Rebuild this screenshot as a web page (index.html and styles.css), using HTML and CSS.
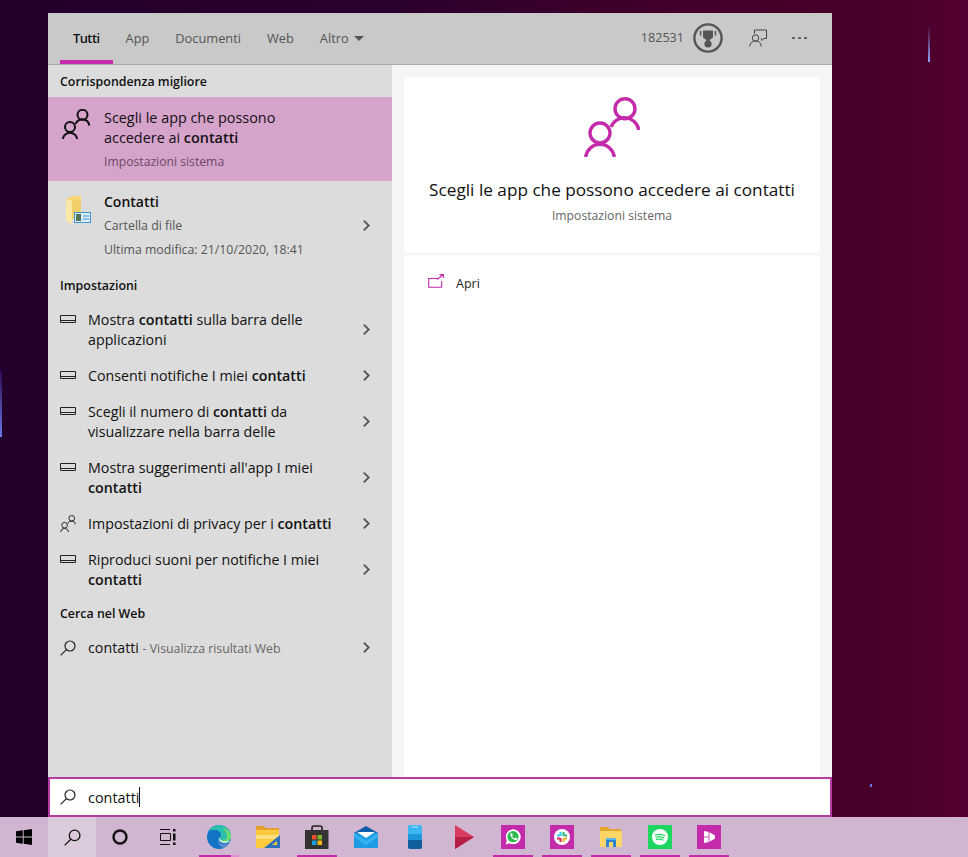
FILE: index.html
```html
<!DOCTYPE html>
<html lang="it">
<head>
<meta charset="utf-8">
<title>Cerca</title>
<link rel="stylesheet" href="styles.css">
</head>
<body>
<svg class="defs" width="0" height="0">
  <symbol id="people" viewBox="0 0 56 60">
    <circle class="ps" cx="41" cy="11.700" r="10"/>
    <path class="ps" d="M27 30A14.500 14.500 0 0 1 54.800 33"/>
    <circle class="ps" cx="16" cy="36" r="10"/>
    <path class="ps" d="M1.700 60A14.400 14.400 0 0 1 30.300 60"/>
  </symbol>
  <symbol id="monitor" viewBox="0 0 16 8">
    <path d="M.5.5h15v7H.5zM.5 5.500h15" fill="none" stroke="currentColor" stroke-width="1"/>
  </symbol>
  <symbol id="lens" viewBox="0 0 16 16">
    <circle cx="10" cy="6" r="5" fill="none" stroke="currentColor" stroke-width="1.200"/>
    <path d="M6.400 9.600L.6 15.400" fill="none" stroke="currentColor" stroke-width="1.200"/>
  </symbol>
  <symbol id="chev" viewBox="0 0 10 14">
    <path d="M2 1.500L7.500 7L2 12.500" fill="none" stroke="currentColor" stroke-width="2"/>
  </symbol>
</svg>

<i class="glow glow-left"></i>
<i class="glow glow-right"></i>
<i class="glow glow-dot"></i>

<main class="stage">
  <section class="window">
    <header class="tabs">
      <nav class="tablist">
        <span class="tab tab-active">Tutti</span>
        <span class="tab">App</span>
        <span class="tab">Documenti</span>
        <span class="tab">Web</span>
        <span class="tab">Altro<i class="caret"></i></span>
      </nav>
      <div class="tools">
        <span class="score">182531</span>
        <svg class="trophy" viewBox="0 0 30 30" width="30" height="30">
          <circle cx="15" cy="15" r="13.600" fill="none" stroke="#555" stroke-width="2.400"/>
          <path d="M10 7.500h10v7l-3.300 2.600v1.600h-3.400v-1.600L10 14.500z" fill="#555"/>
          <circle cx="15" cy="21" r="3.600" fill="#555"/>
          <path d="M7.600 8v4.500M22.400 8v4.500" stroke="#555" stroke-width="1.600"/>
        </svg>
        <svg class="feedback" viewBox="0 0 18 18" width="18" height="18">
          <path d="M5.500 4.500V1h12v8.500h-3l-1.500 2-1-2" fill="none" stroke="#444" stroke-width="1"/>
          <circle cx="6.500" cy="9" r="3.200" fill="#c9c9c9" stroke="#444" stroke-width="1"/>
          <path d="M.8 17.500c0-3.600 2.400-5.500 5.700-5.500s5.700 1.900 5.700 5.500" fill="none" stroke="#444" stroke-width="1"/>
        </svg>
        <span class="dots"><i></i><i></i><i></i></span>
      </div>
    </header>

    <div class="panes">
      <aside class="results">
        <h2 class="heading">Corrispondenza migliore</h2>
        <div class="best">
          <svg class="best-icon"><use href="#people"/></svg>
          <div class="best-text">
            <p class="line best-line">Scegli le app che possono<br>accedere ai <b>contatti</b></p>
            <p class="sub best-sub">Impostazioni sistema</p>
          </div>
        </div>
        <div class="file">
          <svg class="file-icon" viewBox="0 0 26 28" width="26" height="28">
            <path d="M1 3l7-3h8v23H1z" fill="#f6d675"/>
            <path d="M7 5l9-1v19H7z" fill="#f3cf68"/>
            <path d="M1 3l6 2v23l-6-3z" fill="#fbe8a6"/>
            <rect x="9.500" y="16.500" width="16" height="10" fill="#d6ecfa" stroke="#3f95cf"/>
            <rect x="11" y="18" width="5" height="7" fill="#55725a"/>
            <path d="M18 20h6M18 23h6" stroke="#3f95cf"/>
          </svg>
          <div class="file-text">
            <p class="file-title">Contatti</p>
            <p class="file-sub">Cartella di file</p>
            <p class="file-sub">Ultima modifica: 21/10/2020, 18:41</p>
          </div>
          <svg class="chev"><use href="#chev"/></svg>
        </div>

        <h2 class="heading">Impostazioni</h2>
        <div class="row"><svg class="mon"><use href="#monitor"/></svg><p class="line row-text">Mostra <b>contatti</b> sulla barra delle applicazioni</p><svg class="chev"><use href="#chev"/></svg></div>
        <div class="row"><svg class="mon"><use href="#monitor"/></svg><p class="line row-text">Consenti notifiche I miei <b>contatti</b></p><svg class="chev"><use href="#chev"/></svg></div>
        <div class="row"><svg class="mon"><use href="#monitor"/></svg><p class="line row-text">Scegli il numero di <b>contatti</b> da visualizzare nella barra delle</p><svg class="chev"><use href="#chev"/></svg></div>
        <div class="row"><svg class="mon"><use href="#monitor"/></svg><p class="line row-text">Mostra suggerimenti all'app I miei <b>contatti</b></p><svg class="chev"><use href="#chev"/></svg></div>
        <div class="row"><svg class="ppl"><use href="#people"/></svg><p class="line row-text">Impostazioni di privacy per i <b>contatti</b></p><svg class="chev"><use href="#chev"/></svg></div>
        <div class="row"><svg class="mon"><use href="#monitor"/></svg><p class="line row-text">Riproduci suoni per notifiche I miei <b>contatti</b></p><svg class="chev"><use href="#chev"/></svg></div>

        <h2 class="heading">Cerca nel Web</h2>
        <div class="row"><svg class="row-lens"><use href="#lens"/></svg><p class="line row-text">contatti <span class="hint">- Visualizza risultati Web</span></p><svg class="chev"><use href="#chev"/></svg></div>
      </aside>

      <div class="detail">
        <div class="card card-top">
          <svg class="hero"><use href="#people"/></svg>
          <h1 class="hero-title">Scegli le app che possono accedere ai contatti</h1>
          <p class="hero-sub">Impostazioni sistema</p>
        </div>
        <div class="card card-actions">
          <div class="action">
            <svg class="open" viewBox="0 0 16 14" width="16" height="14">
              <path d="M10 4.500H.7v8.800h13V7M9 5.500L15 .8M11.500.6H15.400v3.500" fill="none" stroke="#c42bab" stroke-width="1.100"/>
            </svg>
            <span class="action-label">Apri</span>
          </div>
        </div>
      </div>
    </div>

    <div class="searchbox">
      <svg class="box-lens"><use href="#lens"/></svg>
      <span class="query">contatti</span><i class="cursor"></i>
    </div>
  </section>
</main>

<footer class="taskbar">
  <span class="slot">
    <svg viewBox="0 0 16 16" width="16" height="16"><path d="M0 2.300L6.800 1.300V7.600H0zM7.700 1.200L16 0V7.600H7.700zM0 8.400H6.800V14.700L0 13.700zM7.700 8.400H16V16L7.700 14.800z" fill="#000"/></svg>
  </span>
  <span class="slot slot-active"><svg class="bar-lens"><use href="#lens"/></svg></span>
  <span class="slot"><svg viewBox="0 0 16 16" width="16" height="16"><circle cx="8" cy="8" r="6.500" fill="none" stroke="#111" stroke-width="2.400"/></svg></span>
  <span class="slot"><svg viewBox="0 0 16 16" width="16" height="16"><path d="M0 .5h10M0 15.500h10M.5 4.500h10v7H.5z" fill="none" stroke="#111"/><rect x="13" y="0" width="2.500" height="2.500" fill="#111"/><rect x="13" y="4.500" width="2.500" height="7" fill="#111"/><rect x="13" y="13.500" width="2.500" height="2.500" fill="#111"/></svg></span>

  <span class="slot slot-run slot-edge">
    <svg viewBox="0 0 24 24" width="24" height="24">
      <circle cx="12" cy="12" r="12" fill="#1274c6"/>
      <path d="M1 7C3 2 8 0 12 0c7 0 12 5 12 11 0 4-3 6-6 6-3 0-6-1-6-3 0-1 2-2 2-4 0-3-3-5-6-5-3 0-6 0-8 2z" fill="#2cbfae"/>
      <path d="M16 3c5 1 8 5 8 8 0 4-3 6-6 6-2 0-4-.5-5-1.500 4 .5 7-1 7-4 0-3-2-6-4-8.500z" fill="#6ddc6f"/>
      <path d="M11 14c0 3 3 5 7 5 2 0 4-.8 5.500-2.500L24 20l-6 4c-4-1-8-5-7-10z" fill="#d1b6d1" opacity=".35"/>
      <path d="M12 12.500c-1 3 2 5.500 6 5.500 2 0 4-.7 5-2-1.500 0-3 .5-5 .5-3 0-5-1.500-6-4z" fill="#e9f6f4"/>
    </svg>
  </span>
  <span class="slot">
    <svg viewBox="0 0 24 22" width="24" height="22">
      <path d="M0 0h8l2 2h13v4H0z" fill="#e2a22c"/>
      <path d="M0 4h23v18H0z" fill="#fcc93f"/>
      <path d="M0 9h23v4H0z" fill="#fde07b"/>
      <path d="M24 9v13H8z" fill="#2b6fb8"/>
      <path d="M21 15v4h-5z" fill="#fcc93f"/>
    </svg>
  </span>
  <span class="slot slot-run">
    <svg viewBox="0 0 24 24" width="24" height="24">
      <path d="M7 5V3a2 2 0 0 1 2-2h6a2 2 0 0 1 2 2v2" fill="none" stroke="#222" stroke-width="1.600"/>
      <path d="M0 5h23.500v19H0z" fill="#333"/>
      <rect x="7" y="10" width="4.500" height="4.500" fill="#ea4e2c"/>
      <rect x="12.500" y="10" width="4.500" height="4.500" fill="#7db72c"/>
      <rect x="7" y="15.500" width="4.500" height="4.500" fill="#1c9fe3"/>
      <rect x="12.500" y="15.500" width="4.500" height="4.500" fill="#fdb813"/>
    </svg>
  </span>
  <span class="slot">
    <svg viewBox="0 0 24 22" width="24" height="22">
      <path d="M0 7L12 0l12 7-12 8z" fill="#0f5da8"/>
      <path d="M0 7h24v15H0z" fill="#1f9be6"/>
      <path d="M3 6h18l-9 6z" fill="#fff"/>
      <path d="M0 7l12 8 12-8v4l-12 8-12-8z" fill="#38b1f0"/>
    </svg>
  </span>
  <span class="slot">
    <svg viewBox="0 0 14 24" width="14" height="24">
      <rect width="14" height="24" rx="2" fill="#3db7f2"/>
      <rect y="9" width="14" height="6" fill="#1f96dc"/>
      <path d="M0 15h14v7a2 2 0 0 1-2 2H2a2 2 0 0 1-2-2z" fill="#105f9c"/>
      <path d="M4 2h6" stroke="#bfe8fb"/>
    </svg>
  </span>
  <span class="slot">
    <svg viewBox="0 0 20 24" width="20" height="24">
      <path d="M1 0l19 12L1 24z" fill="#d93a5e"/>
      <path d="M1 12h19L1 24z" fill="#b51f45"/>
    </svg>
  </span>
  <span class="slot slot-run">
    <span class="tile">
      <svg viewBox="0 0 16 16" width="16" height="16">
        <path d="M.6 15.400l1.200-4.100A7.400 7.400 0 1 1 4.700 14.200z" fill="#fff"/>
        <circle cx="8" cy="7.700" r="5.600" fill="#2fb84f"/>
        <path d="M5.500 4.500l1.400-.5 1 2-.9 1c.5 1 1.500 2 2.500 2.500l1-1 2 1-.5 1.500c-3 1-7.500-3.500-6.500-6.500z" fill="#fff"/>
      </svg>
    </span>
  </span>
  <span class="slot slot-run">
    <span class="tile">
      <svg viewBox="0 0 16 16" width="16" height="16">
        <circle cx="8" cy="8" r="8" fill="#fff"/>
        <path d="M6.500 3v4M3 6.500h3" stroke="#36c5f0" stroke-width="2"/>
        <path d="M9.500 3v4M10 6.500h3" stroke="#2eb67d" stroke-width="2"/>
        <path d="M9.500 9v4M10 9.500h3" stroke="#ecb22e" stroke-width="2"/>
        <path d="M6.500 9v4M3 9.500h3" stroke="#e01e5a" stroke-width="2"/>
      </svg>
    </span>
  </span>
  <span class="slot slot-run">
    <svg viewBox="0 0 22 20" width="22" height="20">
      <path d="M0 0h8l2 2h11v17H0z" fill="#e3a52e"/>
      <path d="M0 4h22v16H0z" fill="#fcd568"/>
      <path d="M6 11h10v9h-3v-5H9v5H6z" fill="#2b86d1"/>
      <path d="M6 11h10v2H6z" fill="#59b4ec"/>
    </svg>
  </span>
  <span class="slot slot-run">
    <span class="tile tile-green">
      <svg viewBox="0 0 16 16" width="16" height="16">
        <circle cx="8" cy="8" r="8" fill="#fff"/>
        <path d="M3.500 5.800c3-.8 6-.6 9 .7M4 8.200c2.600-.6 5.200-.4 7.600.7M4.500 10.400c2.200-.5 4.400-.3 6.400.6" fill="none" stroke="#1ed760" stroke-width="1.300" stroke-linecap="round"/>
      </svg>
    </span>
  </span>
  <span class="slot slot-run">
    <span class="tile">
      <svg viewBox="0 0 16 16" width="16" height="16">
        <path d="M3 2l5 1 6 3.500v3L8 13l-5 1z" fill="#fff"/>
        <path d="M8 3v10M3 8h5" fill="none" stroke="#c42bab" stroke-width=".8"/>
      </svg>
    </span>
  </span>
</footer>
</body>
</html>
```

FILE: styles.css
```css
* { box-sizing: border-box; margin: 0; padding: 0; }
html, body { height: 100%; }
body {
  position: relative;
  display: flex;
  flex-direction: column;
  height: 857px;
  overflow: hidden;
  font-family: "Open Sans", "Noto Sans", sans-serif;
  font-size: 14px;
  line-height: 20px;
  color: #111;
  background: linear-gradient(90deg, #22002a 0, #2b002c 40%, #42002a 70%, #480029 92%, #560030 100%);
}
.defs { position: absolute; }
.ps { fill: none; stroke: currentColor; stroke-width: var(--sw, 3.4px); }
.glow { position: absolute; display: block; }
.glow-left { left: 0; top: 370px; width: 2px; height: 67px; background: linear-gradient(#2b0a50, #6a78e8); }
.glow-right { left: 928px; top: 25px; width: 2px; height: 37px; background: linear-gradient(#4a0029, #8fa0f5); }
.glow-dot { left: 870px; top: 784px; width: 2px; height: 3px; background: #6a78e8; }

.stage { flex: 1; padding: 13px 136px 0 48px; }
.window { display: flex; flex-direction: column; height: 804px; }

.tabs {
  display: flex;
  justify-content: space-between;
  height: 52px;
  background: #c9c9c9;
  border-bottom: 1px solid #a9a9a9;
}
.tablist { display: flex; padding-left: 12px; }
.tab {
  display: flex;
  align-items: center;
  height: 51px;
  padding: 0 13px 1px;
  color: #555;
  font-size: 12.800px;
}
.tab-active {
  color: #111;
  font-weight: 600;
  letter-spacing: -.5px;
  border-bottom: 4px solid #c42bab;
  padding-top: 3px;
  padding-bottom: 0;
}
.caret {
  margin-left: 5px;
  border-left: 5px solid transparent;
  border-right: 5px solid transparent;
  border-top: 5px solid #555;
}
.tools { display: flex; align-items: center; height: 51px; padding: 0 25px 1px 0; }
.score { color: #555; font-size: 12.600px; }
.trophy { margin-left: 9px; }
.feedback { margin-left: 26px; }
.dots { display: flex; gap: 3px; margin-left: 25px; }
.dots i { width: 3px; height: 2px; background: #666; }

.panes { flex: 1; display: flex; min-height: 0; }
.results { width: 344px; background: #dcdcdc; }
.heading { height: 32px; padding-left: 12px; font-size: 12.400px; font-weight: 600; line-height: 34px; color: #111; }
.line { font-size: 14.250px; line-height: 20px; }
.line b { font-weight: 600; }

.best { display: flex; height: 84px; background: #d6a3cb; padding: 11px 0 0 14px; }
.best-icon { --sw: 4px; width: 28px; height: 30px; margin-top: 1px; color: #111; }
.best-text { margin-left: 14px; }
.best-line { font-size: 14.400px; }
.best-sub { margin-top: 4px; font-size: 12.200px; color: #6b4a66; }

.file { display: flex; align-items: center; height: 88px; padding: 0 21px 0 17px; }
.file-icon { flex: none; margin-top: -30px; }
.file-text { flex: 1; margin: 2px 0 0 13px; }
.file-title { font-size: 14px; font-weight: 600; line-height: 24px; color: #111; }
.file-sub { font-size: 12.300px; line-height: 24px; color: #555; }

.chev { flex: none; width: 9px; height: 13px; color: #555; }
.row .chev { margin-top: -2px; }
.row { display: flex; align-items: center; padding: 9px 21px 7px 12px; }
.row-text { flex: 1; width: 0; margin-left: 12px; padding-right: 24px; }
.mon { flex: none; width: 16px; height: 8px; align-self: flex-start; margin-top: 5px; color: #222; }
.ppl { flex: none; width: 16px; height: 17px; margin-top: -2px; color: #222; }
.row-lens { flex: none; width: 16px; height: 16px; margin-top: -2px; color: #222; }
.hint { font-size: 12.300px; color: #666; }

.detail { flex: 1; display: flex; flex-direction: column; gap: 2px; padding: 12px 12px 0; background: #f5f5f5; }
.card { background: #fff; }
.card-top { display: flex; flex-direction: column; align-items: center; height: 176px; padding-top: 20px; }
.hero { width: 56px; height: 60px; margin-left: 0; color: #c42bab; }
.hero-title { margin-top: 21px; font-size: 17.200px; font-weight: 400; line-height: 24px; color: #111; }
.hero-sub { margin-top: 4px; font-size: 12.200px; color: #666; }
.card-actions { flex: 1; padding: 19px 24px; }
.action { display: flex; align-items: center; height: 20px; }
.open { margin-top: -6px; }
.action-label { margin-left: 12px; font-size: 12.500px; color: #222; }

.searchbox {
  display: flex;
  align-items: center;
  height: 40px;
  padding-left: 10px;
  background: #fff;
  border: 2px solid #b43ca3;
}
.box-lens { width: 16px; height: 16px; color: #222; }
.query { margin: 2px 0 0 12px; font-size: 14.400px; color: #111; }
.cursor { width: 1px; height: 20px; background: #111; }

.taskbar {
  display: flex;
  align-items: center;
  height: 40px;
  background: #d1b6d1;
}
.slot {
  position: relative;
  display: flex;
  align-items: center;
  justify-content: center;
  width: 48px;
  height: 40px;
}
.slot:nth-child(n+5) { width: 49px; }
.slot:nth-child(5) { margin-left: 2px; }
.slot-active { background: #dbc9dc; }
.slot-run::after {
  content: "";
  position: absolute;
  left: 5px;
  right: 4px;
  bottom: 0;
  height: 2px;
  background: #c42bab;
}
.slot-edge::after { background: linear-gradient(90deg, #c42bab 80%, #e08fd5 80%); }
.bar-lens { width: 17px; height: 17px; color: #111; }
.tile {
  display: flex;
  align-items: center;
  justify-content: center;
  width: 24px;
  height: 24px;
  background: #c42bab;
}
.tile-green { background: #1ed760; }
```
